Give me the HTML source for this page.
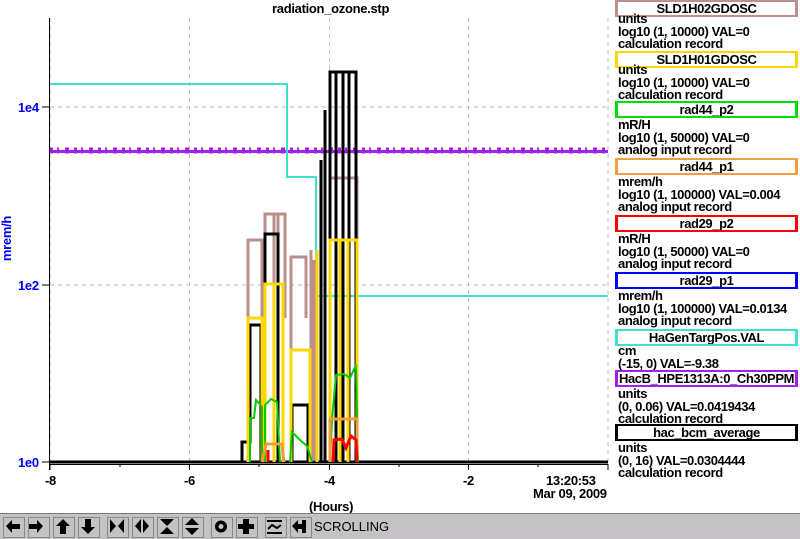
<!DOCTYPE html>
<html><head><meta charset="utf-8"><style>
body{margin:0;width:800px;height:538px;background:#fff;position:relative;overflow:hidden;font-family:"Liberation Sans",sans-serif;font-weight:bold;}
.t{position:absolute;font-size:13px;line-height:13px;color:#000;white-space:nowrap;letter-spacing:-0.3px}
.lb{position:absolute;left:615px;width:177px;height:13px;border:3px solid;border-top-width:2px;border-bottom-width:2px;font-size:13px;line-height:13px;text-align:center;letter-spacing:-0.4px;overflow:hidden;white-space:nowrap}
.li{position:absolute;left:618px;font-size:13px;line-height:12.7px;white-space:nowrap;letter-spacing:-0.4px}
.tb{position:absolute;left:0;top:513px;width:800px;height:25px;background:#c4c2c4;border-top:1px solid #7a7a7a}
.bt{position:absolute;top:3px;width:20px;height:19px;border:1px solid #888;background:#c4c2c4}
</style></head><body>
<svg width="800" height="538" style="position:absolute;left:0;top:0">
<g stroke="#bbb" stroke-dasharray="4,4" stroke-width="1">
<line x1="50" y1="18" x2="50" y2="462"/><line x1="189.5" y1="18" x2="189.5" y2="462"/><line x1="329.5" y1="18" x2="329.5" y2="462"/><line x1="468.5" y1="18" x2="468.5" y2="462"/><line x1="608" y1="18" x2="608" y2="462"/>
<line x1="50" y1="107" x2="608" y2="107"/><line x1="50" y1="285" x2="608" y2="285"/>
</g>
<line x1="49.5" y1="18" x2="49.5" y2="470" stroke="#000"/>
<line x1="42" y1="107" x2="49" y2="107" stroke="#000"/><line x1="42" y1="285" x2="49" y2="285" stroke="#000"/><line x1="42" y1="462" x2="49" y2="462" stroke="#000"/>
<line x1="49" y1="464.5" x2="608" y2="464.5" stroke="#000"/>
<g stroke="#000"><line x1="50" y1="464" x2="50" y2="470"/><line x1="120" y1="464" x2="120" y2="467"/><line x1="189.5" y1="464" x2="189.5" y2="470"/><line x1="259" y1="464" x2="259" y2="467"/><line x1="329.5" y1="464" x2="329.5" y2="470"/><line x1="399" y1="464" x2="399" y2="467"/><line x1="468.5" y1="464" x2="468.5" y2="470"/><line x1="538" y1="464" x2="538" y2="467"/><line x1="608" y1="464" x2="608" y2="470"/></g>
<path d="M50 150.5 H608" stroke="#a020f0" stroke-width="6" stroke-dasharray="3,4,2,6,4,5"/>
<path d="M50 151.5 H608" stroke="#a020f0" stroke-width="3"/>
<polyline points="50,84 287,84 287,177 316,177 316,296 608,296" fill="none" stroke="#40e0d0" stroke-width="2"/>
<g fill="none" stroke="#bc8f8f" stroke-width="3">
<polyline points="248,462 248,240 262,240 262,318"/>
<polyline points="265,462 265,214 285,214 285,318"/>
<polyline points="291,462 291,257 306,257 306,318"/>
<polyline points="330,462 330,178 357,178 357,240"/>
<line x1="278" y1="214" x2="278" y2="460"/><line x1="274" y1="214" x2="274" y2="460"/><line x1="311" y1="250" x2="311" y2="460"/><line x1="314" y1="260" x2="314" y2="460"/>
</g>
<g fill="none" stroke="#000" stroke-width="3">
<line x1="50" y1="462" x2="608" y2="462"/>
<polyline points="242,462 242,442 250,442 250,325 261,325 261,462"/>
<polyline points="265,462 265,234 278,234 278,462"/>
<polyline points="292,462 292,405 308,405 308,462"/>
<polyline points="330,462 330,72 356,72 356,462"/>
<line x1="336" y1="72" x2="336" y2="462"/><line x1="343" y1="72" x2="343" y2="462"/><line x1="349" y1="72" x2="349" y2="462"/><line x1="325" y1="110" x2="325" y2="462"/><line x1="321" y1="160" x2="321" y2="462"/>
</g>
<g fill="none" stroke="#ffd700" stroke-width="3">
<polyline points="248,462 248,318 262,318 262,462"/>
<polyline points="265,462 265,284 283,284 283,462"/>
<polyline points="291,462 291,350 310,350 310,462"/>
<polyline points="330,462 330,240 357,240 357,462"/>
<line x1="340" y1="240" x2="340" y2="462"/><line x1="348" y1="240" x2="348" y2="462"/><line x1="317" y1="250" x2="317" y2="462"/><line x1="274" y1="284" x2="274" y2="462"/>
</g>
<g fill="none" stroke="#00cc00" stroke-width="2">
<polyline points="250,462 250,418 254,418 256,400 262,407 262,462"/>
<polyline points="265,462 265,405 271,399 277,402 280,462"/>
<polyline points="290,462 292,432 300,440 307,446 312,462"/>
<polyline points="330,462 332,420 336,375 344,374 350,378 356,365 358,462"/>
</g>
<g fill="none" stroke-width="3">
<polyline points="262,462 266,444 282,444 284,462" stroke="#ff9933"/>
<polyline points="330,462 330,419 357,419 357,462" stroke="#ff9933"/>
<polyline points="333,462 334,440 342,439 346,448 351,436 356,440 357,462" stroke="#ff0000"/>
<line x1="268" y1="450" x2="268" y2="462" stroke="#ff0000"/>
</g>
</svg>
<div class="t" style="left:272px;top:2px">radiation_ozone.stp</div>
<div class="t" style="left:18px;top:101px;color:#0000ff">1e4</div>
<div class="t" style="left:18px;top:279px;color:#0000ff">1e2</div>
<div class="t" style="left:18px;top:456px;color:#0000ff">1e0</div>
<div class="t" style="left:-16px;top:232px;color:#0000ff;transform:rotate(-90deg)">mrem/h</div>
<div class="t" style="left:45px;top:474px">-8</div>
<div class="t" style="left:184px;top:474px">-6</div>
<div class="t" style="left:324px;top:474px">-4</div>
<div class="t" style="left:463px;top:474px">-2</div>
<div class="t" style="left:546px;top:474px">13:20:53</div>
<div class="t" style="left:533px;top:487px">Mar 09, 2009</div>
<div class="t" style="left:309px;top:500px">(Hours)</div>

<div class="lb" style="top:0;border-color:#bc8f8f">SLD1H02GDOSC</div>
<div class="li" style="top:13px">units<br>log10 (1, 10000) VAL=0<br>calculation record</div>
<div class="lb" style="top:51px;border-color:#ffd700">SLD1H01GDOSC</div>
<div class="li" style="top:64px">units<br>log10 (1, 10000) VAL=0<br>calculation record</div>
<div class="lb" style="top:101px;border-color:#00dd00">rad44_p2</div>
<div class="li" style="top:119px">mR/H<br>log10 (1, 50000) VAL=0<br>analog input record</div>
<div class="lb" style="top:158px;border-color:#f0a040">rad44_p1</div>
<div class="li" style="top:176px">mrem/h<br>log10 (1, 100000) VAL=0.004<br>analog input record</div>
<div class="lb" style="top:215px;border-color:#ff0000">rad29_p2</div>
<div class="li" style="top:233px">mR/H<br>log10 (1, 50000) VAL=0<br>analog input record</div>
<div class="lb" style="top:272px;border-color:#0000ff">rad29_p1</div>
<div class="li" style="top:290px">mrem/h<br>log10 (1, 100000) VAL=0.0134<br>analog input record</div>
<div class="lb" style="top:329px;border-color:#40e0d0">HaGenTargPos.VAL</div>
<div class="li" style="top:345px">cm<br>(-15, 0) VAL=-9.38</div>
<div class="lb" style="top:370px;border-color:#a020f0">HacB_HPE1313A:0_Ch30PPM</div>
<div class="li" style="top:388px">units<br>(0, 0.06) VAL=0.0419434<br>calculation record</div>
<div class="lb" style="top:424px;border-color:#000">hac_bcm_average</div>
<div class="li" style="top:442px">units<br>(0, 16) VAL=0.0304444<br>calculation record</div>

<div class="tb">
<div class="bt" style="left:3px"></div><div class="bt" style="left:28px"></div><div class="bt" style="left:53px"></div><div class="bt" style="left:78px"></div>
<div class="bt" style="left:107px"></div><div class="bt" style="left:132px"></div><div class="bt" style="left:157px"></div><div class="bt" style="left:182px"></div>
<div class="bt" style="left:211px"></div><div class="bt" style="left:236px"></div>
<div class="bt" style="left:265px"></div><div class="bt" style="left:290px"></div>
<svg width="320" height="25" style="position:absolute;left:0;top:0" fill="#000">
<path d="M6 12 L12 6 V10 H20 V15 H12 V19 Z"/>
<path d="M43 12 L37 6 V10 H29 V15 H37 V19 Z"/>
<path d="M63 5 L70 12 H66 V20 H60 V12 H56 Z"/>
<path d="M88 20 L95 13 H91 V5 H85 V13 H81 Z"/>
<path d="M110 5 L116 12 L110 19 Z M124 5 L118 12 L124 19 Z"/>
<path d="M141 5 L135 12 L141 19 Z M143 5 L149 12 L143 19 Z"/>
<path d="M160 5 H174 L167 12 Z M160 20 H174 L167 13 Z"/>
<path d="M192 4 L199 11 H185 Z M192 21 L199 14 H185 Z"/>
<circle cx="221" cy="12.5" r="6"/><circle cx="221" cy="12.5" r="2.5" fill="#c4c2c4"/>
<path d="M243 5 H249 V10 H254 V15 H249 V20 H243 V15 H238 V10 H243 Z"/>
<path d="M267 6 H282 V8 H267 Z M267 18 H282 V20 H267 Z" /><path d="M268 15 L272 11 L277 14 L281 11" stroke="#000" stroke-width="2" fill="none"/>
<path d="M292 12 L298 6 V10 H302 V6 H306 V19 H302 V15 H298 V19 Z"/>
</svg>
<div class="t" style="left:314px;top:6px;font-weight:normal;font-size:13px;letter-spacing:0">SCROLLING</div>
</div>
</body></html>
